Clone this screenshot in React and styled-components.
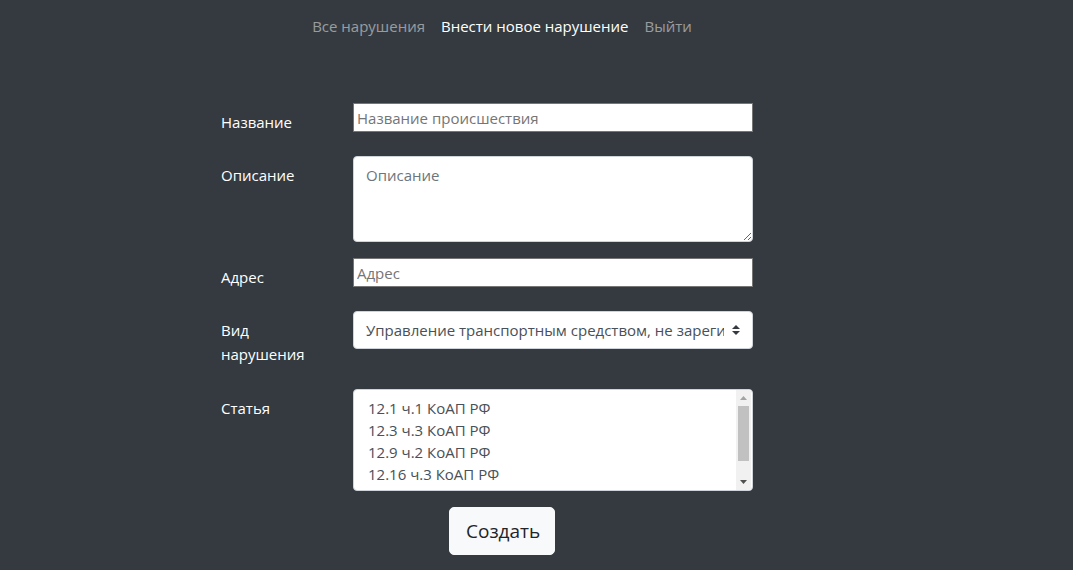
import React from "react";
import styled, { createGlobalStyle } from "styled-components";

const GlobalStyle = createGlobalStyle`
  html, body {
    margin: 0;
    padding: 0;
    background: #343a40;
  }
  body {
    font-family: "Open Sans", "Noto Sans", "Liberation Sans", sans-serif;
    font-size: 15px;
    line-height: 1.5;
    color: #fff;
  }
  * { box-sizing: border-box; }
`;

const Page = styled.div`
  width: 1004px;
  min-height: 570px;
  display: flex;
  flex-direction: column;
  align-items: center;
`;

const Nav = styled.nav`
  display: flex;
  justify-content: center;
  padding: 14px 0 0;
  height: 103px;
`;

const NavLink = styled.a`
  padding: 0 8px;
  line-height: 24px;
  color: ${(p) => (p.$active ? "#fff" : "rgba(255,255,255,0.5)")};
  text-decoration: none;
  cursor: pointer;
`;

const Form = styled.form`
  align-self: flex-start;
  margin-left: 221px;
  display: grid;
  grid-template-columns: 132px 400px;
  row-gap: 16px;
  align-items: start;
`;

const Label = styled.label`
  padding: 7px 0 ${(p) => (p.$multi ? "7px" : "6px")};
  line-height: 24px;
  color: #fff;
  width: 100px;
`;

const PlainInput = styled.input`
  width: 400px;
  height: 29px;
  border: 1px solid #767676;
  border-radius: 0;
  padding: 1px 3px;
  font: inherit;
  background: #fff;
  color: #212529;
  outline: none;
  &::placeholder { color: #757575; }
`;

const TextArea = styled.textarea`
  width: 400px;
  height: 86px;
  border: 1px solid #ced4da;
  border-radius: 4px;
  padding: 7px 12px;
  font: inherit;
  line-height: 1.5;
  color: #495057;
  background: #fff;
  outline: none;
  display: block;
  &::placeholder { color: #6c757d; }
`;

const SelectBox = styled.div`
  position: relative;
  width: 400px;
  height: 38px;
  border: 1px solid #ced4da;
  border-radius: 4px;
  background: #fff;
  padding: 6px 28px 6px 12px;
  color: #495057;
  line-height: 24px;
`;

const SelectValue = styled.span`
  display: block;
  white-space: nowrap;
  overflow: hidden;
`;

const SelectArrow = styled.svg`
  position: absolute;
  right: 12px;
  top: 13px;
`;

const ListBox = styled.div`
  position: relative;
  width: 400px;
  height: 102px;
  border: 1px solid #ced4da;
  border-radius: 4px;
  background: #fff;
  padding: 7px 16px 5px 14px;
  color: #495057;
`;

const Option = styled.div`
  line-height: 22px;
  white-space: nowrap;
`;

const Scrollbar = styled.div`
  position: absolute;
  top: 0;
  right: 1px;
  bottom: 0;
  width: 15px;
  background: #f1f1f1;
  display: flex;
  flex-direction: column;
`;

const ScrollArrow = styled.div`
  height: 16px;
  width: 15px;
  display: flex;
  align-items: center;
  justify-content: center;
`;

const ScrollTrack = styled.div`
  flex: 1;
  width: 100%;
  padding: 0 2px;
`;

const Thumb = styled.div`
  height: 55px;
  background: #c1c1c1;
`;

const ButtonRow = styled.div`
  margin-top: 16px;
`;

const Button = styled.button`
  background: #f8f9fa;
  color: #212529;
  border: 1px solid #f8f9fa;
  border-radius: 5px;
  padding: 8px 16px;
  font: inherit;
  font-size: 19px;
  line-height: 30px;
  height: 48px;
  width: 106px;
  cursor: pointer;
`;

const options = ["12.1 ч.1 КоАП РФ", "12.3 ч.3 КоАП РФ", "12.9 ч.2 КоАП РФ", "12.16 ч.3 КоАП РФ"];

export default function App() {
  return (
    <>
      <GlobalStyle />
      <Page>
        <Nav>
          <NavLink>Все нарушения</NavLink>
          <NavLink $active>Внести новое нарушение</NavLink>
          <NavLink>Выйти</NavLink>
        </Nav>
        <Form onSubmit={(e) => e.preventDefault()}>
          <Label>Название</Label>
          <PlainInput placeholder="Название происшествия" />

          <Label>Описание</Label>
          <TextArea placeholder="Описание" />

          <Label>Адрес</Label>
          <PlainInput placeholder="Адрес" />

          <Label $multi>Вид нарушения</Label>
          <SelectBox>
            <SelectValue>Управление транспортным средством, не зарегистрированным в установленном порядке</SelectValue>
            <SelectArrow width="8" height="10" viewBox="0 0 4 5">
              <path d="M2 0L0 2h4zm0 5L0 3h4z" fill="#343a40" />
            </SelectArrow>
          </SelectBox>

          <Label>Статья</Label>
          <ListBox>
            {options.map((o) => (
              <Option key={o}>{o}</Option>
            ))}
            <Scrollbar>
              <ScrollArrow>
                <svg width="7" height="4" viewBox="0 0 7 4"><path d="M3.5 0L7 4H0z" fill="#a3a3a3" /></svg>
              </ScrollArrow>
              <ScrollTrack><Thumb /></ScrollTrack>
              <ScrollArrow>
                <svg width="7" height="4" viewBox="0 0 7 4"><path d="M0 0h7L3.5 4z" fill="#505050" /></svg>
              </ScrollArrow>
            </Scrollbar>
          </ListBox>
        </Form>
        <ButtonRow>
          <Button type="button">Создать</Button>
        </ButtonRow>
      </Page>
    </>
  );
}
